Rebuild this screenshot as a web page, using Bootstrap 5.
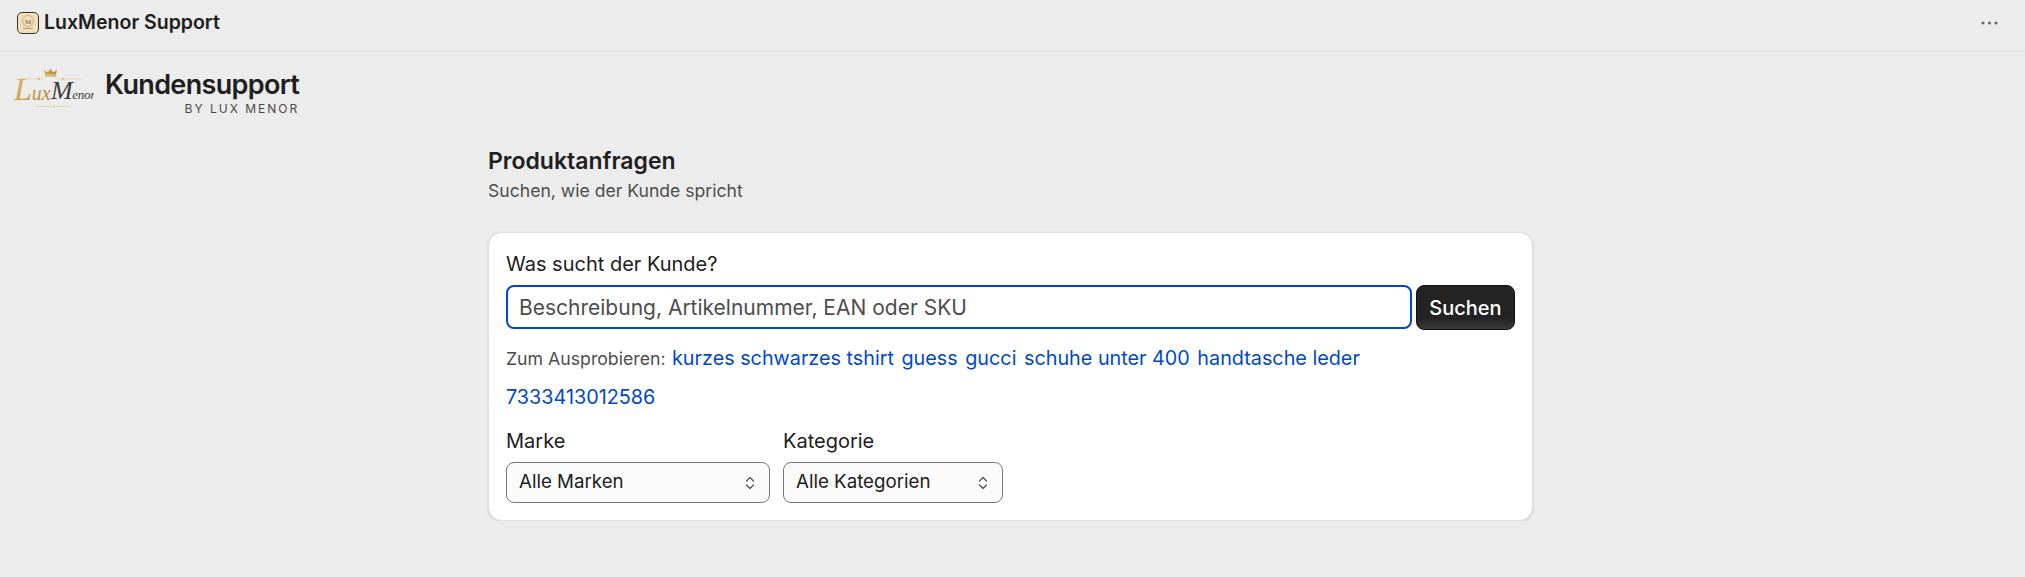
<!DOCTYPE html>
<html lang="de">
<head>
    <meta charset="UTF-8">
    <meta name="viewport" content="width=device-width, initial-scale=1.0">
    <title>LuxMenor Support</title>
    <link href="https://cdn.jsdelivr.net/npm/bootstrap@5.3.0/dist/css/bootstrap.min.css" rel="stylesheet">
    <style>
        body { background: #ececec; color: #202020; font-family: Inter, "Liberation Sans", sans-serif; overflow: hidden; }
        .topbar { height: 52px; padding: 0 27px 6px 17px; border-bottom: 1px solid #e2e2e2; }
        .topbar-title { font-size: 19.5px; font-weight: 600; line-height: 1; margin-left: 5px; }
        .app-icon { width: 22px; height: 22px; display: block; }
        .brand { padding: 16px 0 0 12px; height: 95px; }
        .brand-logo { width: 82px; height: 44px; display: block; margin-right: 11px; }
        .brand-title { font-size: 27px; font-weight: 600; line-height: 30px; letter-spacing: -.65px; margin-top: 2px; }
        .brand-sub { font-size: 12px; line-height: 14px; letter-spacing: 2px; color: #4a4a4a; text-align: right; margin-top: 2px; }
        .content { width: 1045px; margin-left: 488px; }
        .content h2 { font-size: 23px; font-weight: 600; line-height: 28px; margin: 0 0 5px; }
        .content .lead-text { font-size: 17.6px; line-height: 22px; color: #4d4d4d; margin-bottom: 30px; }
        .search-card { border: 1px solid #e0e0e0; border-radius: 14px; box-shadow: 0 1px 3px rgba(0, 0, 0, .12); padding: 18px 17px 17px; height: 289px; }
        .field-label { font-size: 20px; line-height: 26px; margin-bottom: 8px; display: block; }
        .search-input.form-control { height: 44px; border: 2px solid #0047cc; border-radius: 8px; font-size: 21px; padding: 0 11px; box-shadow: none; color: #202020; }
        .search-input::placeholder { color: #4d4d4d; opacity: 1; }
        .search-btn.btn { height: 45px; width: 99px; margin-left: 4px; padding: 0; font-size: 20px; font-weight: 500; color: #fff; border: 1px solid #111; border-radius: 8px; background: linear-gradient(#232323 75%, #3a3a3a); }
        .hints { margin-top: 9px; line-height: 38px; }
        .hints span { font-size: 17.7px; color: #4d4d4d; margin-right: 2px; }
        .hints a { font-size: 19.8px; color: #0047cc; text-decoration: none; margin-right: 3px; }
        .hints-row2 { height: 38px; }
        .filters { margin-top: 12px; gap: 13px; }
        .filter-select.form-select { height: 41px; border: 1px solid #777; border-radius: 8px; background-color: #fbfbfb; font-size: 18.7px; padding: 0 30px 0 12px; color: #202020; background-size: 14px 18px; background-position: right 12px center;
            background-image: url("data:image/svg+xml,%3Csvg xmlns='http://www.w3.org/2000/svg' viewBox='0 0 14 18'%3E%3Cpath fill='none' stroke='%23555' stroke-width='1.3' stroke-linecap='round' stroke-linejoin='round' d='M3.5 7 7 3.5 10.5 7M3.5 11 7 14.5 10.5 11'/%3E%3C/svg%3E"); }
        .filter-marke { width: 264px; }
        .filter-kategorie { width: 220px; }
        .dots { width: 17px; height: 4px; display: block; }
    </style>
</head>
<body>
    <div class="topbar d-flex align-items-center">
        <svg class="app-icon" viewBox="0 0 22 22">
            <rect x=".5" y=".5" width="21" height="21" rx="4.5" fill="#f0dfbd" stroke="#3a3226"/>
            <circle cx="11" cy="9" r="5.500" fill="none" stroke="#b3945f" stroke-width=".7"/>
            <text x="11" y="11.500" font-size="7" text-anchor="middle" font-family="Liberation Serif, serif" fill="#6e5733">M</text>
            <rect x="6" y="16" width="10" height="1" fill="#b79b6b"/>
        </svg>
        <div class="topbar-title">LuxMenor Support</div>
        <svg class="dots ms-auto" viewBox="0 0 17 4"><circle cx="2" cy="2" r="1.600" fill="#6b6b6b"/><circle cx="8.500" cy="2" r="1.600" fill="#6b6b6b"/><circle cx="15" cy="2" r="1.600" fill="#6b6b6b"/></svg>
    </div>

    <div class="brand d-flex align-items-start">
        <svg class="brand-logo" viewBox="0 0 82 44">
            <defs>
                <linearGradient id="gold" x1="0" y1="0" x2="1" y2="1">
                    <stop offset="0" stop-color="#e6c374"/><stop offset="1" stop-color="#a87a25"/>
                </linearGradient>
            </defs>
            <path d="M33 6.500 32 1.500 35.500 4.500 38.500 .5 41.500 4.500 45 1.500 44 6.500Z" fill="url(#gold)"/>
            <rect x="33" y="7.300" width="11" height="1.200" fill="#c9a04f"/>
            <path d="M8 10.800H32M45 10.800H70" stroke="#e3c888" stroke-width=".6"/>
            <circle cx="27" cy="10.800" r=".9" fill="#c9a04f"/><circle cx="51" cy="10.800" r=".9" fill="#c9a04f"/>
            <text x="2" y="32" font-family="Liberation Serif, serif" font-style="italic" fill="url(#gold)" font-size="20"><tspan font-size="32">L</tspan>ux</text>
            <text x="39" y="31" font-family="Liberation Serif, serif" font-style="italic" fill="#3c3c3c" font-size="13" letter-spacing="-.3"><tspan font-size="26">M</tspan>enor</text>
            <path d="M24 38.500H40M44 38.500H58" stroke="#e3c888" stroke-width=".6"/>
            <circle cx="42" cy="38.500" r=".8" fill="#c9a04f"/>
        </svg>
        <div>
            <div class="brand-title">Kundensupport</div>
            <div class="brand-sub">BY LUX MENOR</div>
        </div>
    </div>

    <div class="content">
        <h2>Produktanfragen</h2>
        <div class="lead-text">Suchen, wie der Kunde spricht</div>
        <div class="card search-card">
            <label class="field-label" for="q">Was sucht der Kunde?</label>
            <div class="d-flex">
                <input id="q" class="form-control search-input" type="text" placeholder="Beschreibung, Artikelnummer, EAN oder SKU">
                <button class="btn search-btn flex-shrink-0" type="button">Suchen</button>
            </div>
            <div class="hints">
                <span>Zum Ausprobieren:</span>
                <a href="#">kurzes schwarzes tshirt</a>
                <a href="#">guess</a>
                <a href="#">gucci</a>
                <a href="#">schuhe unter 400</a>
                <a href="#">handtasche leder</a>
            </div>
            <div class="hints hints-row2 mt-0"><a href="#">7333413012586</a></div>
            <div class="filters d-flex">
                <div class="filter-marke">
                    <label class="field-label" for="m">Marke</label>
                    <select id="m" class="form-select filter-select"><option>Alle Marken</option></select>
                </div>
                <div class="filter-kategorie">
                    <label class="field-label" for="k">Kategorie</label>
                    <select id="k" class="form-select filter-select"><option>Alle Kategorien</option></select>
                </div>
            </div>
        </div>
    </div>
    <script src="https://cdn.jsdelivr.net/npm/bootstrap@5.3.0/dist/js/bootstrap.bundle.min.js"></script>
</body>
</html>
